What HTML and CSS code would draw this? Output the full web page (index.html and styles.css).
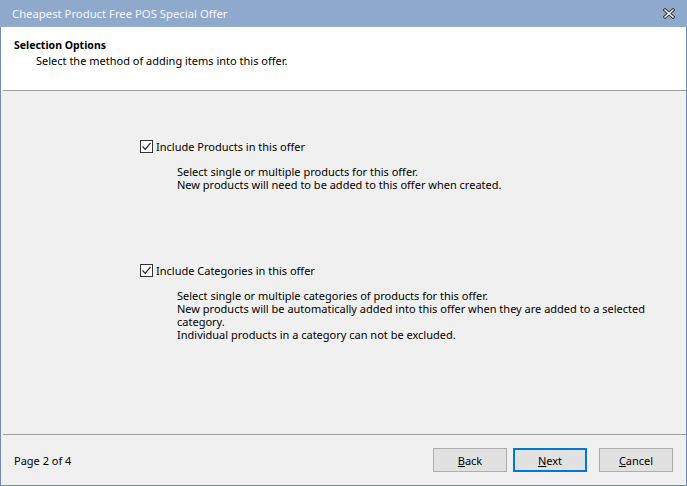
FILE: index.html
```html
<!DOCTYPE html>
<html lang="en">
<head>
  <meta charset="UTF-8">
  <title>Cheapest Product Free POS Special Offer</title>
  <link rel="stylesheet" href="styles.css">
</head>
<body>
  <div class="window">
    <div class="titlebar">
      <span class="title">Cheapest Product Free POS Special Offer</span>
      <span class="close">
        <svg width="12" height="11" viewBox="0 0 12 11">
          <path d="M2 2 L10 9 M10 2 L2 9" stroke="#2b2b2b" stroke-width="3.2" stroke-linecap="square"/>
          <path d="M2 2 L10 9 M10 2 L2 9" stroke="#fff" stroke-width="1.5" stroke-linecap="square"/>
        </svg>
      </span>
    </div>

    <div class="header">
      <div class="header-title">Selection Options</div>
      <div class="header-sub">Select the method of adding items into this offer.</div>
    </div>
    <div class="rule"></div>

    <div class="content">
      <div class="option first">
        <label class="check-row">
          <span class="checkbox">
            <svg width="11" height="11" viewBox="0 0 11 11">
              <path d="M1.5 5.5 L4.2 8.3 L9.6 1.8" fill="none" stroke="#222" stroke-width="1.2"/>
            </svg>
          </span>
          Include Products in this offer
        </label>
        <div class="desc">
          <div>Select single or multiple products for this offer.</div>
          <div>New products will need to be added to this offer when created.</div>
        </div>
      </div>

      <div class="option second">
        <label class="check-row">
          <span class="checkbox">
            <svg width="11" height="11" viewBox="0 0 11 11">
              <path d="M1.5 5.5 L4.2 8.3 L9.6 1.8" fill="none" stroke="#222" stroke-width="1.2"/>
            </svg>
          </span>
          Include Categories in this offer
        </label>
        <div class="desc">
          <div>Select single or multiple categories of products for this offer.</div>
          <div>New products will be automatically added into this offer when they are added to a selected</div>
          <div>category.</div>
          <div>Individual products in a category can not be excluded.</div>
        </div>
      </div>
    </div>

    <div class="rule"></div>
    <div class="footer">
      <span class="page-info">Page 2 of 4</span>
      <div class="buttons">
        <button class="btn back"><u>B</u>ack</button>
        <button class="btn next"><u>N</u>ext</button>
        <button class="btn cancel"><u>C</u>ancel</button>
      </div>
    </div>
  </div>
</body>
</html>
```

FILE: styles.css
```css
body {
  margin: 0;
  font-family: "Segoe UI", "Noto Sans", "Liberation Sans", sans-serif;
  font-size: 11px;
  color: #000;
}

.window {
  width: 687px;
  height: 486px;
  box-sizing: border-box;
  border: 1px solid #6f8cb6;
  border-top: none;
  background-color: #f0f0f0;
  display: flex;
  flex-direction: column;
}

.titlebar {
  height: 26px;
  margin: 0 -1px;
  background-color: #8fa9cd;
  color: #f4f7fb;
  display: flex;
  align-items: center;
  justify-content: space-between;
  padding: 0 12px 1px 12px;
  flex-shrink: 0;
  font-size: 11.3px;
}

.close {
  display: flex;
}

.header {
  background-color: #fff;
  height: 63px;
  box-sizing: border-box;
  padding: 11px 13px 0;
  flex-shrink: 0;
}

.header-title {
  font-weight: bold;
  font-size: 10.5px;
  line-height: 15px;
}

.header-sub {
  padding-left: 22px;
  line-height: 15px;
}

.rule {
  height: 1px;
  background-color: #a0a0a0;
  margin: 0 0 0 2px;
  flex-shrink: 0;
}

.content {
  flex: 1;
  padding-left: 139px;
}

.option.first {
  padding-top: 48px;
}

.option.second {
  padding-top: 72px;
}

.check-row {
  display: flex;
  align-items: center;
  gap: 3px;
  line-height: 15px;
}

.checkbox {
  width: 13px;
  height: 13px;
  box-sizing: border-box;
  border: 1px solid #333;
  background-color: #fff;
  display: flex;
  align-items: center;
  justify-content: center;
}

.desc {
  margin-top: 11px;
  padding-left: 37px;
  line-height: 13px;
  white-space: nowrap;
}

.footer {
  height: 50px;
  display: flex;
  align-items: center;
  justify-content: space-between;
  padding: 0 13px;
  flex-shrink: 0;
}

.buttons {
  display: flex;
}

.btn {
  width: 74px;
  height: 24px;
  font-family: inherit;
  font-size: 11px;
  color: #000;
  background-color: #e1e1e1;
  border: 1px solid #adadad;
  padding: 0;
}

.btn.next {
  border: 2px solid #0078d7;
  margin-left: 6px;
}

.btn.cancel {
  margin-left: 12px;
}
```
